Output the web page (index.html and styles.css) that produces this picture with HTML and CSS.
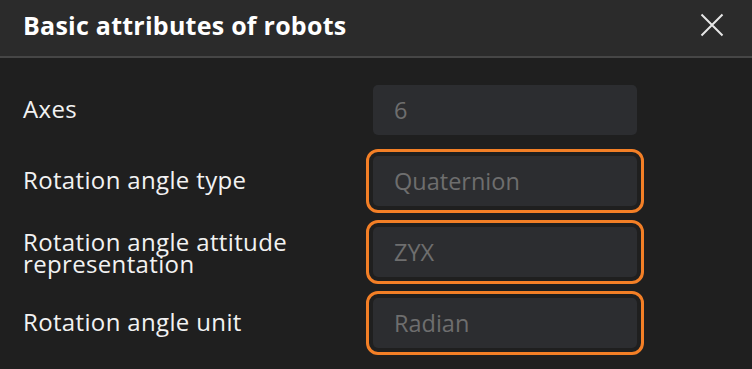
FILE: index.html
```html
<!DOCTYPE html>
<html lang="en">
<head>
<meta charset="utf-8">
<title>Basic attributes of robots</title>
<link rel="stylesheet" href="styles.css">
</head>
<body>
<div class="dialog">
  <header class="header">
    <h1 class="title">Basic attributes of robots</h1>
    <button class="close" aria-label="Close">
      <svg width="24" height="24" viewBox="0 0 24 24"><path d="M1.5 1.5 L22.5 22.5 M22.5 1.5 L1.5 22.5" stroke="#e6e6e6" stroke-width="2" fill="none"/></svg>
    </button>
  </header>
  <div class="form">
    <div class="label">Axes</div>
    <div class="field"><span class="value">6</span></div>
    <div class="label">Rotation angle type</div>
    <div class="field marked"><span class="value">Quaternion</span></div>
    <div class="label two-line">Rotation angle attitude<br>representation</div>
    <div class="field marked"><span class="value">ZYX</span></div>
    <div class="label">Rotation angle unit</div>
    <div class="field marked"><span class="value">Radian</span></div>
  </div>
</div>
</body>
</html>
```
FILE: styles.css
```css
html, body {
  margin: 0;
  padding: 0;
  background: #1f1f1f;
}
body {
  font-family: "Open Sans", "Noto Sans", "Liberation Sans", sans-serif;
  width: 752px;
  height: 369px;
  overflow: hidden;
}
.dialog {
  display: flex;
  flex-direction: column;
}
.header {
  height: 56px;
  background: #2b2b2b;
  border-bottom: 2px solid #464646;
  display: flex;
  align-items: center;
  justify-content: space-between;
  padding: 0 28px 0 23px;
}
.title {
  margin: -6px 0 0 0;
  font-size: 25px;
  font-weight: 700;
  color: #ffffff;
  letter-spacing: 0.25px;
}
.close {
  background: none;
  border: 0;
  padding: 0;
  width: 24px;
  height: 24px;
  display: flex;
  margin-top: -6px;
}
.form {
  display: grid;
  grid-template-columns: 350px 264px;
  grid-auto-rows: 50px;
  row-gap: 21px;
  padding: 27px 0 0 23px;
}
.label {
  display: flex;
  align-items: center;
  color: #f2f2f2;
  font-size: 24px;
  line-height: 1.2;
  letter-spacing: 0.35px;
  padding-bottom: 2px;
}
.label.two-line {
  line-height: 22px;
  padding: 2px 0 0 0;
}
.field {
  background: #2c2d30;
  border-radius: 5px;
  display: flex;
  align-items: center;
  padding-left: 21px;
}
.field.marked {
  outline: 3px solid #f37f26;
  outline-offset: 4px;
}
.value {
  color: #6e6e6e;
  font-size: 23.5px;
}
```
